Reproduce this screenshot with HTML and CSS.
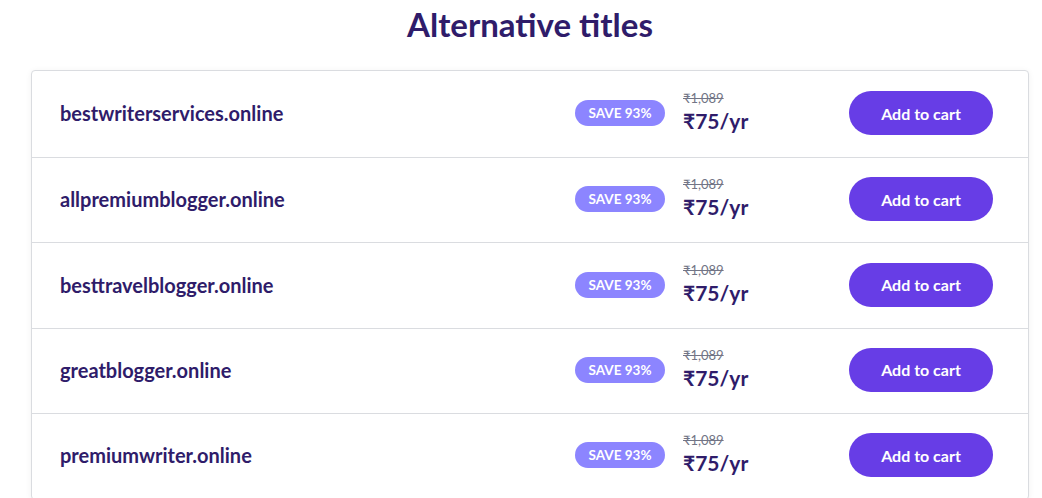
FILE: index.html
```html
<!DOCTYPE html>
<html lang="en">
<head>
<meta charset="utf-8">
<title>Alternative titles</title>
<link rel="stylesheet" href="styles.css">
</head>
<body>
<main class="page">
  <h2 class="title">Alternative titles</h2>
  <div class="card">
    <div class="row">
      <span class="domain">bestwriterservices.online</span>
      <div class="right">
        <span class="badge">SAVE 93%</span>
        <div class="price"><s class="old">₹1,089</s><span class="now">₹75/yr</span></div>
        <button class="btn">Add to cart</button>
      </div>
    </div>
    <div class="row">
      <span class="domain">allpremiumblogger.online</span>
      <div class="right">
        <span class="badge">SAVE 93%</span>
        <div class="price"><s class="old">₹1,089</s><span class="now">₹75/yr</span></div>
        <button class="btn">Add to cart</button>
      </div>
    </div>
    <div class="row">
      <span class="domain">besttravelblogger.online</span>
      <div class="right">
        <span class="badge">SAVE 93%</span>
        <div class="price"><s class="old">₹1,089</s><span class="now">₹75/yr</span></div>
        <button class="btn">Add to cart</button>
      </div>
    </div>
    <div class="row">
      <span class="domain">greatblogger.online</span>
      <div class="right">
        <span class="badge">SAVE 93%</span>
        <div class="price"><s class="old">₹1,089</s><span class="now">₹75/yr</span></div>
        <button class="btn">Add to cart</button>
      </div>
    </div>
    <div class="row">
      <span class="domain">premiumwriter.online</span>
      <div class="right">
        <span class="badge">SAVE 93%</span>
        <div class="price"><s class="old">₹1,089</s><span class="now">₹75/yr</span></div>
        <button class="btn">Add to cart</button>
      </div>
    </div>
  </div>
</main>
</body>
</html>
```
FILE: styles.css
```css
* { box-sizing: border-box; }
html, body { margin: 0; padding: 0; background: #fff; }
body {
  font-family: "Lato", "Noto Sans", "DejaVu Sans", sans-serif;
  color: #2f1c6a;
}
.page {
  width: 998px;
  margin-left: 31px;
}
.title {
  margin: 0;
  height: 70px;
  padding-top: 5px;
  text-align: center;
  font-size: 33px;
  font-weight: 700;
  line-height: 38px;
  color: #2f1c6a;
}
.card {
  border: 1px solid #dadce0;
  border-radius: 4px;
  box-shadow: 0 1px 6px rgba(0,0,0,0.06);
  background: #fff;
}
.row {
  display: flex;
  align-items: center;
  justify-content: space-between;
  height: 85.4px;
  padding: 0 35px 2px 28px;
  border-top: 1px solid #dadce0;
}
.row:first-child { border-top: none; height: 86px; }
.domain {
  font-size: 20px;
  font-weight: 700;
  color: #2f1c6a;
}
.right {
  display: flex;
  align-items: center;
}
.badge {
  display: inline-flex;
  align-items: center;
  justify-content: center;
  width: 90px;
  height: 26px;
  border-radius: 13px;
  background: #8c85ff;
  color: #fff;
  font-size: 13.5px;
  font-weight: 700;
}
.price {
  display: flex;
  flex-direction: column;
  width: 166px;
  margin-left: 18px;
  margin-top: -2px;
}
.old {
  font-size: 13px;
  line-height: 16px;
  color: #727586;
}
.now {
  margin-top: 2px;
  font-size: 21px;
  font-weight: 700;
  line-height: 26px;
  color: #2f1c6a;
}
.btn {
  width: 144px;
  height: 44px;
  border: none;
  border-radius: 22px;
  background: #673de6;
  color: #fff;
  font-family: inherit;
  font-size: 16px;
  font-weight: 700;
}
```
